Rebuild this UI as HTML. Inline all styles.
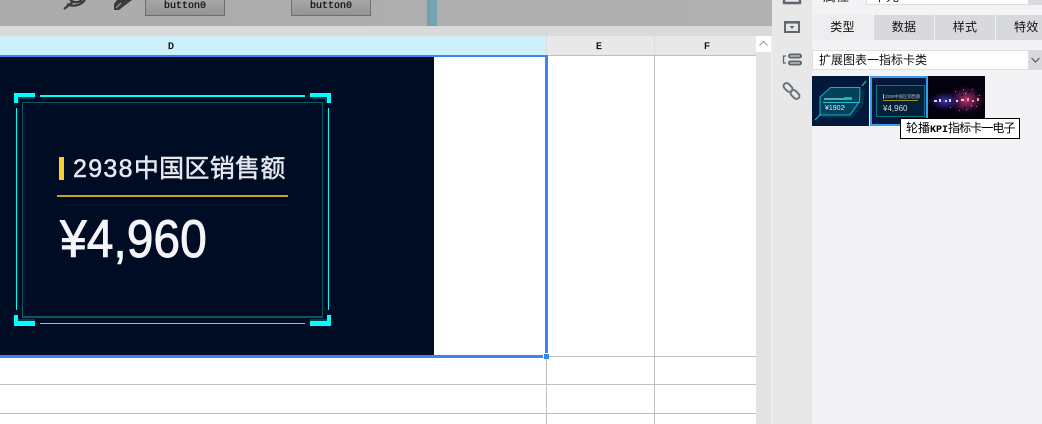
<!DOCTYPE html>
<html lang="zh">
<head>
<meta charset="utf-8">
<style>
html,body{margin:0;padding:0;background:#fff}
#r{position:relative;width:1042px;height:424px;overflow:hidden;background:#fff;font-family:"Liberation Sans","Noto Sans CJK SC",sans-serif}
#r div{position:absolute;box-sizing:border-box}
.c{background:#0ff}
.t{white-space:nowrap;line-height:1}
.hd{font:10px "Liberation Mono",monospace;-webkit-text-stroke:.3px #000;color:#000;top:42px;line-height:11px;text-align:center}
.btn{top:-10px;width:80px;height:26px;border:1px solid #6e6e6e;background:linear-gradient(#b2b2b2,#949494);font:10px/12px "Liberation Mono",monospace;-webkit-text-stroke:.25px #111;color:#111;text-align:center;padding-top:10px}
.tab{top:15px;height:25px;background:#d8d9dd;font-size:12px;letter-spacing:.3px;line-height:25px;text-align:center;color:#111}
.g{background:#bfbfbf}
</style>
</head>
<body>
<div id="r">
  <!-- top designer strip -->
  <div style="left:0;top:0;width:772px;height:26px;background:linear-gradient(90deg,#ababab,#b0b0b0)"></div>
  <svg style="position:absolute;left:60px;top:0" width="75" height="12" viewBox="0 0 75 12">
    <path d="M4 9 L14 1 M7 4 C13 7 20 6 25 0 M10 0 C14 3 18 3 22 0" stroke="#3a3a3a" stroke-width="2.200" fill="none"/>
    <path d="M54 10 L54 4 L57 0 L72 0 L64 6 L59 10 Z" fill="#3a3a3a"/>
    <path d="M56 8 L61 3" stroke="#ababab"/>
  </svg>
  <div class="btn" style="left:145px">button0</div>
  <div class="btn" style="left:291px">button0</div>
  <div style="left:427px;top:0;width:10px;height:26px;background:#74a2b0;border-left:1px solid #8c9497"></div>
  <div style="left:0;top:26px;width:772px;height:10px;background:#dadadc"></div>

  <!-- column headers -->
  <div style="left:0;top:36px;width:546px;height:19px;background:#cdf0fb"></div>
  <div style="left:547px;top:36px;width:107px;height:19px;background:#e8e8e8"></div>
  <div style="left:655px;top:36px;width:101px;height:19px;background:#e8e8e8"></div>
  <div style="left:546px;top:36px;width:1px;height:19px;background:#dcdcdc"></div>
  <div style="left:654px;top:36px;width:1px;height:19px;background:#dcdcdc"></div>
  <div style="left:547px;top:55px;width:209px;height:1px;background:#bfbfbf"></div>
  <div class="hd" style="left:161px;width:20px">D</div>
  <div class="hd" style="left:589px;width:20px">E</div>
  <div class="hd" style="left:697px;width:20px">F</div>

  <!-- grid -->
  <div class="g" style="left:654px;top:56px;width:1px;height:368px"></div>
  <div class="g" style="left:546px;top:358px;width:1px;height:66px"></div>
  <div class="g" style="left:549px;top:356px;width:207px;height:1px"></div>
  <div class="g" style="left:0;top:384px;width:756px;height:1px"></div>
  <div class="g" style="left:0;top:413px;width:756px;height:1px"></div>

  <!-- card -->
  <div style="left:0;top:57px;width:434px;height:298px;background:#000c24"></div>
  <!-- inner teal frame -->
  <div style="left:22px;top:102px;width:301px;height:216px;border:1px solid #035a66;border-bottom-width:2px"></div>
  <!-- thin cyan lines -->
  <div class="c" style="left:40px;top:95px;width:265px;height:2px"></div>
  <div class="c" style="left:40px;top:323px;width:265px;height:1px"></div>
  <div class="c" style="left:16px;top:108px;width:1px;height:202px"></div>
  <div class="c" style="left:328px;top:108px;width:1px;height:202px"></div>
  <!-- dark corner shadows -->
  <div style="left:18px;top:97px;width:17px;height:2px;background:#04404c"></div>
  <div style="left:18px;top:97px;width:2px;height:6px;background:#04404c"></div>
  <div style="left:310px;top:97px;width:17px;height:2px;background:#04404c"></div>
  <div style="left:325px;top:97px;width:2px;height:6px;background:#04404c"></div>
  <div style="left:18px;top:319px;width:17px;height:2px;background:#04404c"></div>
  <div style="left:310px;top:319px;width:17px;height:2px;background:#04404c"></div>
  <!-- bright corners -->
  <div class="c" style="left:14px;top:93px;width:21px;height:4px"></div>
  <div class="c" style="left:14px;top:93px;width:4px;height:10px"></div>
  <div class="c" style="left:310px;top:93px;width:21px;height:4px"></div>
  <div class="c" style="left:327px;top:93px;width:4px;height:10px"></div>
  <div class="c" style="left:14px;top:321px;width:21px;height:5px"></div>
  <div class="c" style="left:14px;top:315px;width:4px;height:11px"></div>
  <div class="c" style="left:310px;top:321px;width:21px;height:5px"></div>
  <div class="c" style="left:327px;top:315px;width:4px;height:11px"></div>
  <!-- card content -->
  <div style="left:59px;top:157px;width:5px;height:23px;background:#f6cf2f"></div>
  <div class="t" style="left:73px;top:155px;font-size:25px;line-height:28px;color:#e6e8ee;letter-spacing:1.300px;-webkit-text-stroke:.5px #e6e8ee">2938<span style="letter-spacing:.3px">中国区销售额</span></div>
  <div style="left:57px;top:195px;width:231px;height:2px;background:#c9a420"></div>
  <div class="t" style="left:60px;top:215px;font-size:48px;line-height:54px;color:#f4f5f8;-webkit-text-stroke:.8px #f4f5f8;transform:scale(1,1.110);transform-origin:0 43px">¥4,960</div>

  <!-- selection -->
  <div style="left:0;top:55px;width:548px;height:2px;background:#3a85f0"></div>
  <div style="left:545px;top:55px;width:3px;height:298px;background:#3a85f0"></div>
  <div style="left:0;top:355px;width:543px;height:3px;background:#3a85f0"></div>
  <div style="left:544px;top:354px;width:5px;height:5px;background:#3a85f0"></div>

  <!-- scrollbar -->
  <div style="left:756px;top:36px;width:16px;height:388px;background:#e3e3e3;border-right:1px solid #f3f3f3"></div>
  <div style="left:756px;top:36px;width:15px;height:16px;background:#fff"></div>
  <svg style="position:absolute;left:756px;top:36px" width="15" height="16"><path d="M3.500 9.500 L7.500 5.500 L11.500 9.500" stroke="#999" fill="none"/></svg>

  <!-- icon rail -->
  <div style="left:772px;top:0;width:40px;height:424px;background:#e8e8e8"></div>
  <svg style="position:absolute;left:772px;top:0" width="40" height="105" viewBox="0 0 40 105">
    <path d="M12 0 V3 H28 V0" fill="none" stroke="#5f6670" stroke-width="2.400"/>
    <rect x="13" y="22" width="14" height="10" fill="none" stroke="#5f6670" stroke-width="2"/>
    <rect x="12" y="21" width="16" height="2.600" fill="#5f6670"/>
    <path d="M17.500 26 H22.500 L20 29 Z" fill="#5f6670"/>
    <rect x="17" y="54.500" width="12" height="3" rx="1.500" fill="none" stroke="#5f6670" stroke-width="2"/>
    <rect x="17" y="61.500" width="12" height="3" rx="1.500" fill="none" stroke="#5f6670" stroke-width="2"/>
    <path d="M14 56 H11.500 V63 H14" fill="none" stroke="#5f6670" stroke-width="1.300"/>
    <rect x="11" y="84.500" width="10" height="6" rx="3" fill="none" stroke="#6a7078" stroke-width="2" transform="rotate(45 16 87.500)"/>
    <rect x="18" y="91.500" width="10" height="6" rx="3" fill="none" stroke="#6a7078" stroke-width="2" transform="rotate(45 23 94.500)"/>
  </svg>

  <!-- panel -->
  <div style="left:812px;top:0;width:230px;height:424px;background:#f3f3f6"></div>
  <div style="left:866px;top:-3px;width:163px;height:8px;background:#fff;border:1px solid #ddd"></div>
  <div style="left:1029px;top:0;width:13px;height:5px;background:#d8d9dd"></div>
  <div class="t" style="left:823px;top:-10px;font-size:13px;line-height:14px;color:#222">属性</div>
  <div class="t" style="left:873px;top:-10px;font-size:13px;line-height:14px;color:#222">单元</div>

  <div class="tab" style="left:812px;width:61px;background:#eeeef0">类型</div>
  <div class="tab" style="left:874px;width:60px">数据</div>
  <div class="tab" style="left:935px;width:60px">样式</div>
  <div class="tab" style="left:996px;width:46px;text-align:left;padding-left:18px">特效</div>

  <div style="left:812px;top:50px;width:217px;height:20px;background:#fff;border:1px solid #ddd"></div>
  <div class="t" style="left:819px;top:53px;font-size:12px;line-height:14px;color:#111">扩展图表一指标卡类</div>
  <div style="left:1029px;top:50px;width:13px;height:20px;background:#d8d9dd"></div>
  <svg style="position:absolute;left:1029px;top:50px" width="13" height="20"><path d="M2.500 8 L6.500 12 L10.500 8" stroke="#555" stroke-width="1.200" fill="none"/></svg>

  <!-- thumb 1 -->
  <svg style="position:absolute;left:812px;top:76px" width="57" height="50" viewBox="0 0 57 50">
    <rect width="57" height="50" fill="#03183a"/>
    <path d="M8 24 L22 14 L53 14 L51 30 L40 42 L10 42 Z" fill="#052f48"/>
    <path d="M8 21 L18.500 11.500 L48 11.500 L47.500 25.500 L38 39 L8 39 Z" fill="#04425c" stroke="#12aecb" stroke-width="1.100"/>
    <path d="M3 44 L9 38 M50 10 L54 5" stroke="#17b9d8" stroke-width="1.100"/>
    <rect x="12" y="22" width="20" height="2" fill="#8fc7d8" opacity=".7"/>
    <rect x="32" y="21" width="8" height="3" fill="#18b6b0"/>
    <rect x="11" y="26" width="36" height="1" fill="#18c8d8"/>
    <text x="13" y="34" font-size="7" fill="#dfeef4" font-family="Liberation Sans">¥1902</text>
    <circle cx="32" cy="31" r="1" fill="#18c8d8"/>
  </svg>
  <!-- thumb 2 -->
  <svg style="position:absolute;left:870px;top:76px" width="58" height="50" viewBox="0 0 58 50">
    <rect width="58" height="50" fill="#3b9bf0"/>
    <rect x="2" y="2" width="54" height="46" fill="#03183a"/>
    <rect x="6.500" y="9.500" width="48" height="31" fill="#032038" stroke="#0b7485"/>
    <rect x="13" y="18" width="1" height="5" fill="#e6c02c"/>
    <text x="15" y="22.200" font-size="4.300" fill="#a8b4c0" font-family="Liberation Sans,Noto Sans CJK SC">2938中国区销售额</text>
    <rect x="13" y="24" width="35" height="1" fill="#a59022"/>
    <text x="13" y="35" font-size="8" fill="#d5dde4" font-family="Liberation Sans">¥4,960</text>
  </svg>
  <!-- thumb 3 -->
  <svg style="position:absolute;left:928px;top:76px" width="57" height="50" viewBox="0 0 57 50">
    <defs>
      <radialGradient id="a"><stop offset="0" stop-color="#b83a68"/><stop offset=".55" stop-color="#5a1a48" stop-opacity=".75"/><stop offset="1" stop-color="#0a0418" stop-opacity="0"/></radialGradient>
      <radialGradient id="b"><stop offset="0" stop-color="#3a3ab0"/><stop offset=".6" stop-color="#2a1a70" stop-opacity=".6"/><stop offset="1" stop-color="#0a0418" stop-opacity="0"/></radialGradient>
    </defs>
    <rect width="57" height="50" fill="#05020f"/>
    <ellipse cx="38" cy="24" rx="20" ry="15" fill="url(#a)"/>
    <ellipse cx="17" cy="25" rx="17" ry="10" fill="url(#b)"/>
    <g fill="#05020f" opacity=".55">
      <rect x="20" y="14" width="2" height="2"/><rect x="30" y="12" width="2" height="2"/><rect x="40" y="15" width="2" height="2"/><rect x="47" y="17" width="2" height="2"/><rect x="26" y="32" width="2" height="2"/><rect x="36" y="31" width="2" height="2"/><rect x="44" y="32" width="2" height="2"/><rect x="33" y="18" width="2" height="2"/><rect x="24" y="19" width="2" height="2"/>
    </g>
    <g fill="#e05a80">
      <rect x="27" y="15" width="1" height="1"/><rect x="35" y="13" width="1" height="1"/><rect x="44" y="13" width="1" height="1"/><rect x="51" y="19" width="1" height="1"/><rect x="38" y="33" width="1" height="1"/><rect x="31" y="34" width="1" height="1"/><rect x="48" y="30" width="1" height="1"/><rect x="22" y="31" width="1" height="1"/>
    </g>
    <g fill="#d6d2ff">
      <rect x="6" y="24" width="3" height="2"/><rect x="11" y="23" width="2" height="3"/><rect x="17" y="24" width="2" height="2"/><rect x="21" y="23" width="2" height="3"/><rect x="28" y="24" width="2" height="2"/><rect x="33" y="23" width="3" height="2"/>
    </g>
    <g fill="#ff8db0">
      <rect x="39" y="22" width="2" height="3"/><rect x="44" y="24" width="2" height="2"/><rect x="49" y="22" width="2" height="3"/><rect x="37" y="17" width="1" height="1"/><rect x="43" y="29" width="1" height="1"/>
    </g>
  </svg>

  <!-- tooltip -->
  <div style="left:900px;top:118px;width:120px;height:21px;background:#fff;border:1px solid #000"></div>
  <div class="t" style="left:906px;top:121px;font-size:12px;line-height:15px;color:#000">轮播<span style="font:bold 10px 'Liberation Mono',monospace">KPI</span><span style="letter-spacing:-.9px">指标卡一电子</span></div>
</div>
</body>
</html>
